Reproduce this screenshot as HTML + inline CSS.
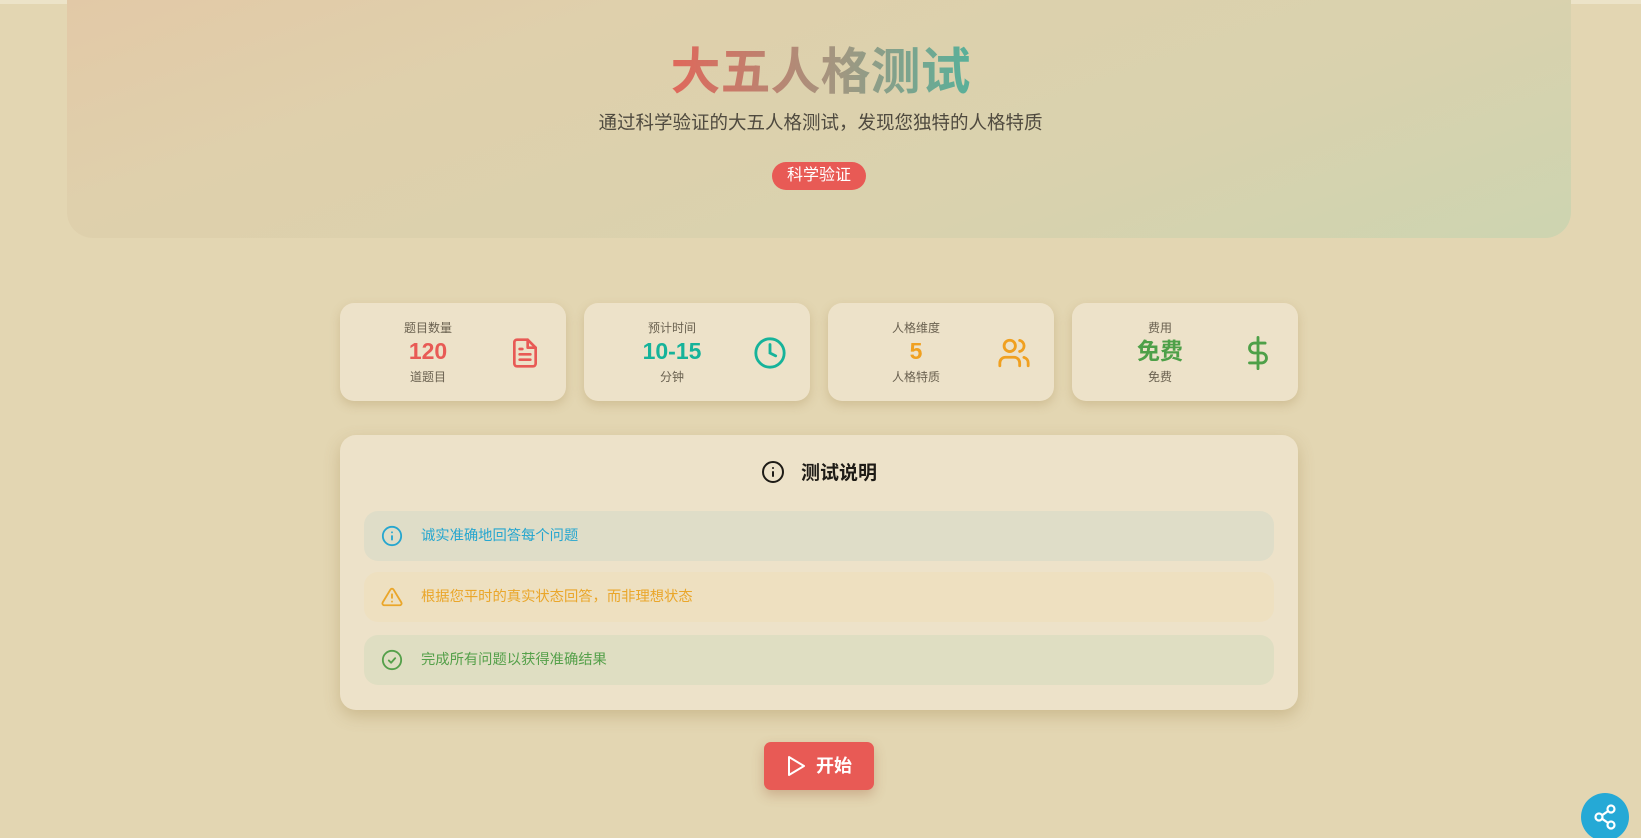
<!DOCTYPE html>
<html><head><meta charset="utf-8"><style>
*{box-sizing:border-box;margin:0;padding:0}
html,body{width:1641px;height:838px;overflow:hidden}
body{background:#e3d6b2;font-family:"Liberation Sans","Noto Sans CJK SC",sans-serif;position:relative}
.topbar{position:absolute;left:0;top:0;width:1641px;height:4px;background:#ece3c8}
.hero{position:absolute;left:67px;top:-30px;width:1504px;height:268px;border-radius:26px;background:linear-gradient(160deg,#e3c8a6 0%,#dfd0ac 30%,#d9d2ae 70%,#cdd4b0 100%)}
.title{position:absolute;left:0;width:1641px;top:39px;text-align:center;font-size:50px;font-weight:bold;line-height:66px}
.title span{background:linear-gradient(90deg,#e0675a,#a39680 55%,#58b09a);-webkit-background-clip:text;background-clip:text;color:transparent}
.sub{position:absolute;left:0;width:1641px;top:110px;text-align:center;font-size:18.5px;color:#4f4a3f;line-height:26px}
.badge{position:absolute;left:772px;top:162px;width:94px;height:28px;border-radius:14px;background:#e85a55;color:#fff;font-size:16px;text-align:center;line-height:28px}
.card{position:absolute;top:303px;width:226px;height:98px;border-radius:14px;background:#ede2c9;box-shadow:0 4px 10px rgba(150,120,60,.25)}
.card .t{position:absolute;left:0;width:176px;text-align:center}
.l1{top:16px;font-size:12px;color:#6a6150}
.l2{top:34px;font-size:23px;font-weight:bold;line-height:28px}
.l3{top:65px;font-size:12px;color:#6a6150}
.card svg{position:absolute;left:169px;top:33px}
.inst{position:absolute;left:340px;top:435px;width:958px;height:275px;border-radius:16px;background:#ede2c9;box-shadow:0 6px 16px rgba(150,120,60,.3)}
.ih{position:absolute;top:25px;left:0;width:958px;text-align:center;font-size:19px;font-weight:bold;color:#1e1b16;line-height:26px}
.ih svg{vertical-align:-5px;margin-right:16px}
.item{position:absolute;left:24px;width:910px;height:50px;border-radius:14px;font-size:14.3px;line-height:50px;padding-left:57px}
.item svg{position:absolute;left:17px;top:14px}
.btn{position:absolute;left:764px;top:742px;width:110px;height:48px;border-radius:7px;background:#e85a55;color:#fff;font-size:18px;font-weight:bold;line-height:48px;box-shadow:0 5px 12px rgba(150,80,50,.3)}
.btn svg{position:absolute;left:22px;top:13px}
.btn span{position:absolute;left:52px}
.share{position:absolute;left:1581px;top:793px;width:48px;height:48px;border-radius:50%;background:#25a9d6}
</style></head><body>
<div class="topbar"></div>
<div class="hero"></div>
<div class="title"><span>大五人格测试</span></div>
<div class="sub">通过科学验证的大五人格测试，发现您独特的人格特质</div>
<div class="badge">科学验证</div>

<div class="card" style="left:340px"><div class="t l1">题目数量</div><div class="t l2" style="color:#e85a55">120</div><div class="t l3">道题目</div>
<svg width="32" height="34" viewBox="0 0 24 24" fill="none" stroke="#e85a55" stroke-width="2" stroke-linecap="round" stroke-linejoin="round"><path d="M14 2H6a2 2 0 0 0-2 2v16a2 2 0 0 0 2 2h12a2 2 0 0 0 2-2V8z"/><path d="M14 2v6h6M16 13H8M16 17H8M10 9H8"/></svg></div>
<div class="card" style="left:584px"><div class="t l1">预计时间</div><div class="t l2" style="color:#16b39a">10-15</div><div class="t l3">分钟</div>
<svg width="34" height="34" viewBox="0 0 24 24" fill="none" stroke="#16b39a" stroke-width="2" stroke-linecap="round"><circle cx="12" cy="12" r="10"/><path d="M12 6v6l4 2"/></svg></div>
<div class="card" style="left:828px"><div class="t l1">人格维度</div><div class="t l2" style="color:#f0a020">5</div><div class="t l3">人格特质</div>
<svg width="34" height="34" viewBox="0 0 24 24" fill="none" stroke="#f0a020" stroke-width="2" stroke-linecap="round"><path d="M16 21v-2a4 4 0 0 0-4-4H6a4 4 0 0 0-4 4v2"/><circle cx="9" cy="7" r="4"/><path d="M22 21v-2a4 4 0 0 0-3-3.9M16 3.1a4 4 0 0 1 0 7.8"/></svg></div>
<div class="card" style="left:1072px"><div class="t l1">费用</div><div class="t l2" style="color:#4ea048">免费</div><div class="t l3">免费</div>
<svg width="34" height="34" viewBox="0 0 24 24" fill="none" stroke="#4ea048" stroke-width="2" stroke-linecap="round"><path d="M12 1v22M17 5H9.5a3.5 3.5 0 0 0 0 7h5a3.5 3.5 0 0 1 0 7H6"/></svg></div>

<div class="inst">
<div class="ih"><svg width="24" height="24" viewBox="0 0 24 24" fill="none" stroke="#1e1b16" stroke-width="2" stroke-linecap="round"><circle cx="12" cy="12" r="10"/><path d="M12 16v-4M12 8h.01"/></svg>测试说明</div>
<div class="item" style="top:76px;background:#dfddc8;color:#26a6cf"><svg width="22" height="22" viewBox="0 0 24 24" fill="none" stroke="#26a6cf" stroke-width="2" stroke-linecap="round"><circle cx="12" cy="12" r="10"/><path d="M12 16v-4M12 8h.01"/></svg>诚实准确地回答每个问题</div>
<div class="item" style="top:137px;background:#eee0c0;color:#eaa62a"><svg width="22" height="22" viewBox="0 0 24 24" fill="none" stroke="#eaa62a" stroke-width="2" stroke-linecap="round" stroke-linejoin="round"><path d="M10.3 3.9L1.8 18a2 2 0 0 0 1.7 3h17a2 2 0 0 0 1.7-3L13.7 3.9a2 2 0 0 0-3.4 0z"/><path d="M12 9v4M12 17h.01"/></svg>根据您平时的真实状态回答，而非理想状态</div>
<div class="item" style="top:200px;background:#dfdec2;color:#55a04a"><svg width="22" height="22" viewBox="0 0 24 24" fill="none" stroke="#55a04a" stroke-width="2" stroke-linecap="round" stroke-linejoin="round"><circle cx="12" cy="12" r="10"/><path d="M8.5 12.5l2.5 2.5 4.5-5"/></svg>完成所有问题以获得准确结果</div>
</div>

<div class="btn"><svg width="20" height="22" viewBox="0 0 20 22" fill="none" stroke="#fff" stroke-width="2" stroke-linejoin="round"><path d="M3 2l15 9-15 9z"/></svg><span>开始</span></div>
<div class="share"><svg width="48" height="48" viewBox="0 0 48 48" fill="none" stroke="#fff" stroke-width="2.2"><circle cx="30" cy="16" r="3.5"/><circle cx="18" cy="24" r="3.5"/><circle cx="30" cy="32" r="3.5"/><path d="M21 22.3l6-4.2M21 25.7l6 4.2"/></svg></div>
</body></html>
